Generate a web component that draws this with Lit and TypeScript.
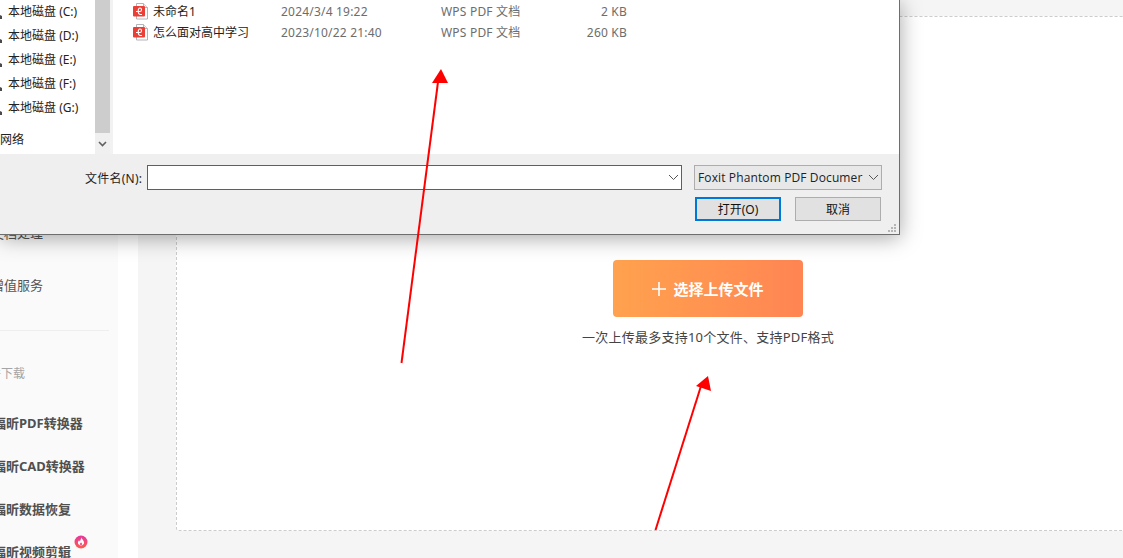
import { LitElement, html, css, svg } from "lit";
import { customElement } from "lit/decorators.js";

const chevron = (cls: string) => html`<svg class=${cls} width="11" height="7" viewBox="0 0 11 7"><path d="M1 1l4.500 4.500L10 1" fill="none" stroke="#555" stroke-width="1"/></svg>`;

const pdfIcon = html`<svg class="pdf" width="15" height="17" viewBox="0 0 15 17">
  <path d="M3.500.5h7l4 4v11.500h-11z" fill="#fff" stroke="#b4b4b8"/>
  <path d="M10.500.5v4h4" fill="#f0f0f0" stroke="#b4b4b8"/>
  <rect x="0" y="3" width="12" height="10.500" rx="1" fill="#ea3f37"/>
  <path d="M3 8.500h4c2 0 2-3.500 0-3.500-1.500 0-1.800 1.500-1.800 3 0 1.700 0 3.500 2.300 3.500h1.500" fill="none" stroke="#fff" stroke-width="1.100"/>
</svg>`;

const drives = ["(C:)", "(D:)", "(E:)", "(F:)", "(G:)"];
const files = [
  { name: "未命名1", date: "2024/3/4 19:22", type: "WPS PDF 文档", size: "2 KB" },
  { name: "怎么面对高中学习", date: "2023/10/22 21:40", type: "WPS PDF 文档", size: "260 KB" },
];

@customElement("app-root")
export class AppRoot extends LitElement {
  static styles = css`
    :host {
      display: block;
      position: relative;
      width: 1123px;
      height: 558px;
      overflow: hidden;
      background: #fff;
      font-family: "Noto Sans", "Noto Sans CJK SC", sans-serif;
    }
    .page {
      display: grid;
      grid-template-columns: 118px 20px 1fr;
      height: 558px;
    }
    .side {
      background: #fafafa;
      overflow: hidden;
      padding-top: 207px;
    }
    .nav-item {
      height: 52px;
      line-height: 52px;
      margin-left: -9px;
      font-size: 13px;
      color: #555;
      white-space: nowrap;
    }
    .side hr {
      border: 0;
      height: 1px;
      background: #eeeeee;
      margin: 19px 9px 0 0;
    }
    .side-title {
      height: 20px;
      line-height: 20px;
      margin: 33px 0 18px -23px;
      font-size: 12px;
      color: #a5a5a5;
      white-space: nowrap;
    }
    .app-item {
      position: relative;
      height: 43px;
      line-height: 43px;
      margin-left: -7px;
      font-size: 13px;
      font-weight: 700;
      color: #505050;
      white-space: nowrap;
    }
    .fire {
      position: absolute;
      left: 81px;
      top: 4px;
    }
    .main {
      background: #f5f5f5;
      padding: 16px 0 27px 38px;
      min-width: 0;
    }
    .panel {
      box-sizing: border-box;
      height: 515px;
      width: 1064px;
      background: #fff;
      border: 1px dashed #cccccc;
      border-radius: 3px;
      padding-top: 243px;
      display: flex;
      flex-direction: column;
      align-items: center;
    }
    .upload {
      width: 190px;
      height: 57px;
      border-radius: 4px;
      background: linear-gradient(90deg, #ffa24e, #ff8553);
      color: #fff;
      font-size: 15px;
      font-weight: 700;
      display: flex;
      align-items: center;
      justify-content: center;
      gap: 7px;
    }
    .caption {
      margin-top: 10px;
      font-size: 13px;
      line-height: 20px;
      letter-spacing: 0.25px;
      color: #444;
      white-space: nowrap;
    }
    .dialog {
      position: absolute;
      left: 0;
      top: 0;
      box-sizing: border-box;
      width: 900px;
      height: 235px;
      background: #efefef;
      border-right: 1px solid #6e6e6e;
      border-bottom: 1px solid #6e6e6e;
      box-shadow: 0 3px 20px rgba(0, 0, 0, 0.35);
      font-size: 12px;
      color: #222;
      display: flex;
      flex-direction: column;
    }
    .browser {
      height: 154px;
      flex: none;
      background: #fff;
      display: flex;
      overflow: hidden;
    }
    .tree {
      width: 95px;
      flex: none;
    }
    .drive {
      position: relative;
      height: 24px;
      line-height: 24px;
      padding-left: 8px;
      white-space: nowrap;
    }
    .drive-glyph {
      position: absolute;
      left: 0;
      top: 14px;
    }
    .net {
      height: 24px;
      line-height: 24px;
      margin-top: 8px;
    }
    .scroll {
      width: 15px;
      flex: none;
      display: flex;
      flex-direction: column;
      background: #f0f0f0;
    }
    .thumb {
      height: 133px;
      background: #cdcdcd;
    }
    .scroll-btn {
      flex: 1;
      display: flex;
      align-items: center;
      justify-content: center;
    }
    .split {
      width: 3px;
      flex: none;
      background: #f2f2f2;
    }
    .list {
      flex: 1;
      padding: 1px 0 0 20px;
      min-width: 0;
    }
    .file {
      display: grid;
      grid-template-columns: 20px 128px 160px 80px 106px;
      height: 21px;
      line-height: 21px;
      align-items: center;
      white-space: nowrap;
    }
    .pdf {
      display: block;
    }
    .muted {
      color: #6d6d6d;
      letter-spacing: 0.2px;
    }
    .size {
      text-align: right;
    }
    .form {
      position: relative;
      flex: 1;
      padding: 11px 17px 0 85px;
    }
    .name-row {
      display: flex;
      align-items: center;
      height: 25px;
    }
    .name-label {
      width: 62px;
      flex: none;
      white-space: nowrap;
      letter-spacing: 0.25px;
    }
    .input {
      box-sizing: border-box;
      width: 535px;
      height: 25px;
      flex: none;
      background: #fff;
      border: 1px solid #0078d7;
      display: flex;
      align-items: center;
      justify-content: flex-end;
      padding-right: 2px;
    }
    .combo {
      box-sizing: border-box;
      width: 188px;
      height: 25px;
      margin-left: 12px;
      flex: none;
      background: #e8e8e8;
      border: 1px solid #adadad;
      display: flex;
      align-items: center;
      justify-content: space-between;
      padding: 0 2px 0 3px;
      font-family: "Open Sans", "Noto Sans", sans-serif;
      white-space: nowrap;
      overflow: hidden;
      letter-spacing: 0.12px;
    }
    .buttons {
      display: flex;
      justify-content: flex-end;
      gap: 14px;
      margin: 7px 1px 0 0;
    }
    .btn {
      box-sizing: border-box;
      width: 86px;
      height: 24px;
      background: #e1e1e1;
      border: 1px solid #adadad;
      display: flex;
      align-items: center;
      justify-content: center;
      color: #111;
    }
    .btn.primary {
      border: 2px solid #0078d7;
    }
    .grip {
      position: absolute;
      right: 2px;
      bottom: 1px;
    }
    .arrows {
      position: absolute;
      left: 0;
      top: 0;
      pointer-events: none;
    }
  `;

  render() {
    return html`
      <div class="page">
        <aside class="side">
          <div class="nav-item">文档处理</div>
          <div class="nav-item">增值服务</div>
          <hr />
          <div class="side-title">软件下载</div>
          <div class="app-item">福昕PDF转换器</div>
          <div class="app-item">福昕CAD转换器</div>
          <div class="app-item">福昕数据恢复</div>
          <div class="app-item">福昕视频剪辑
            <svg class="fire" width="14" height="14" viewBox="0 0 14 14">
              <defs><linearGradient id="fg" x1="0" y1="0" x2="0" y2="1"><stop offset="0" stop-color="#e4389f"/><stop offset="1" stop-color="#ff5c4a"/></linearGradient></defs>
              <circle cx="7" cy="7" r="6.500" fill="url(#fg)"/>
              <path d="M7.200 2.600c.3 1.500 2.900 2.900 2.900 5.200 0 1.500-1.300 2.600-3.100 2.600S3.900 9.300 3.900 7.800c0-1.200.7-2 1.200-2.600l.6 1.200c.8-.9 1.500-2.500 1.500-3.800z" fill="#fff"/>
              <path d="M7 7.200c.5.700 1.200 1.100 1.200 1.900 0 .6-.5 1-1.200 1s-1.200-.4-1.200-1c0-.8.8-1.200 1.200-1.900z" fill="#f4508a"/>
            </svg>
          </div>
        </aside>
        <div></div>
        <main class="main">
          <section class="panel">
            <div class="upload">
              <svg width="14" height="14" viewBox="0 0 14 14"><path d="M7 0v14M0 7h14" stroke="#fff" stroke-width="1.600" fill="none"/></svg>
              <span>选择上传文件</span>
            </div>
            <div class="caption">一次上传最多支持10个文件、支持PDF格式</div>
          </section>
        </main>
      </div>

      <div class="dialog">
        <div class="browser">
          <div class="tree">
            ${drives.map(
              (d) => html`<div class="drive">
                <svg class="drive-glyph" width="3" height="5" viewBox="0 0 3 5"><path d="M0 1l2 1v3H0z" fill="#4a4a4a"/></svg>
                本地磁盘 ${d}
              </div>`
            )}
            <div class="net">网络</div>
          </div>
          <div class="scroll">
            <div class="thumb"></div>
            <div class="scroll-btn">
              <svg width="9" height="6" viewBox="0 0 9 6"><path d="M1 1l3.500 3.500L8 1" fill="none" stroke="#606060" stroke-width="1.600"/></svg>
            </div>
          </div>
          <div class="split"></div>
          <div class="list">
            ${files.map(
              (f) => html`<div class="file">
                ${pdfIcon}
                <span>${f.name}</span>
                <span class="muted">${f.date}</span>
                <span class="muted">${f.type}</span>
                <span class="muted size">${f.size}</span>
              </div>`
            )}
          </div>
        </div>
        <div class="form">
          <div class="name-row">
            <span class="name-label">文件名(N):</span>
            <div class="input">${chevron("c")}</div>
            <div class="combo"><span>Foxit Phantom PDF Documer</span>${chevron("c")}</div>
          </div>
          <div class="buttons">
            <div class="btn primary">打开(O)</div>
            <div class="btn">取消</div>
          </div>
          <svg class="grip" width="10" height="9" viewBox="0 0 10 9" fill="#b5b5b5">
            <rect x="7" y="0" width="2" height="2"/><rect x="4" y="3" width="2" height="2"/><rect x="7" y="3" width="2" height="2"/>
            <rect x="1" y="6" width="2" height="2"/><rect x="4" y="6" width="2" height="2"/><rect x="7" y="6" width="2" height="2"/>
          </svg>
        </div>
      </div>

      <svg class="arrows" width="1123" height="558" viewBox="0 0 1123 558">
        ${svg`<path d="M401.500 363L438 82" stroke="#ff0000" stroke-width="2" fill="none"/>
        <path d="M441 69L448 83L432 83z" fill="#ff0000"/>
        <path d="M655.500 530L701 386" stroke="#ff0000" stroke-width="2" fill="none"/>
        <path d="M708 376L711 391L696 386z" fill="#ff0000"/>`}
      </svg>
    `;
  }
}
